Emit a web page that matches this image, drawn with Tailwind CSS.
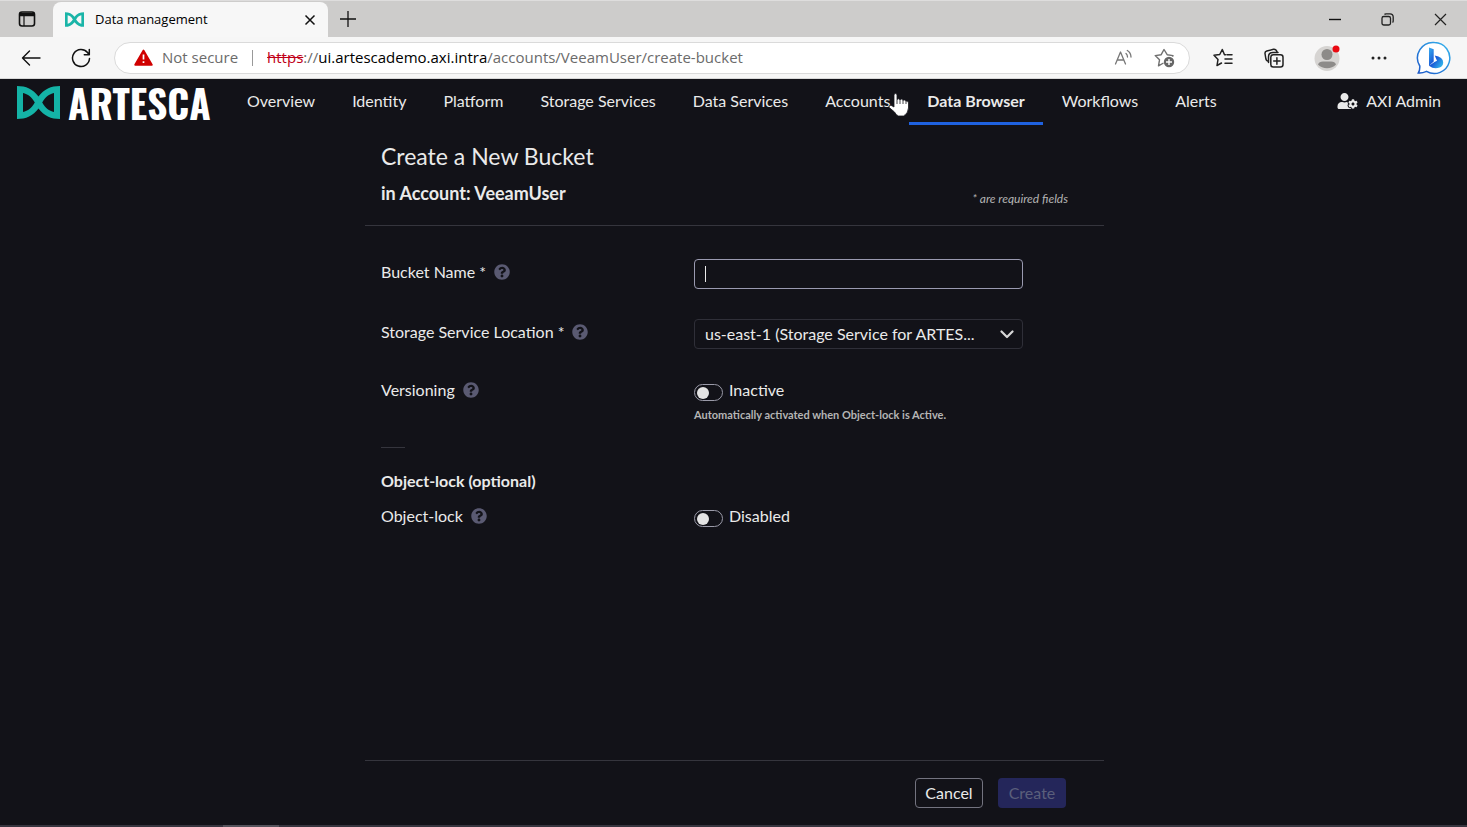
<!DOCTYPE html>
<html lang="en">
<head>
<meta charset="utf-8">
<meta name="viewport" content="width=device-width, initial-scale=1">
<title>Data management</title>
<script src="https://cdn.jsdelivr.net/npm/@tailwindcss/browser@4"></script>
</head>
<body class="flex min-h-screen flex-col bg-[#121218] font-['Lato',sans-serif] text-base text-[#eaeaea]">

<svg class="hidden" aria-hidden="true">
  <symbol id="bowtie" viewBox="0 0 43 33">
    <path fill-rule="evenodd" d="M0 0C9 0 16 3 21.500 10.500C27 3 34 0 43 0V33C34 33 27 30 21.500 22.500C16 30 9 33 0 33ZM6 7V26C11 25 14.500 22 17.800 16.500C14.500 11 11 8 6 7ZM37 7C32 8 28.500 11 25.200 16.500C28.500 22 32 25 37 26Z"/>
  </symbol>
  <symbol id="help" viewBox="0 0 512 512">
    <path d="M504 256c0 137-111 248-248 248S8 393 8 256C8 119 119 8 256 8s248 111 248 248zM262.700 90c-54.500 0-89.300 23-116.500 63.800-3.500 5.300-2.400 12.400 2.700 16.300l34.700 26.300c5.200 3.900 12.600 3 16.700-2.100 17.900-22.700 30.100-35.800 57.300-35.800 20.400 0 45.700 13.100 45.700 33 0 15-12.400 22.700-32.500 34C247.100 238.500 216 254.900 216 296v4c0 6.600 5.400 12 12 12h56c6.600 0 12-5.400 12-12v-1.300c0-28.500 83.200-29.600 83.200-106.700 0-58-60.200-102-116.500-102zM256 338c-25.400 0-46 20.600-46 46s20.600 46 46 46 46-20.600 46-46-20.600-46-46-46z"/>
  </symbol>
</svg>

<!-- Browser window -->
<div class="font-['Open_Sans',sans-serif] text-black">
  <div class="flex h-[37px] items-stretch border-t border-[#dedddd] bg-[#cdcccb]">
    <button type="button" aria-label="Tab actions" class="flex w-[53px] items-center justify-center">
      <svg class="size-[18px]" viewBox="0 0 18 18" fill="none" stroke="#111" stroke-width="1.600"><rect x="1.500" y="2" width="15" height="14" rx="2.500"/><path d="M1.500 4.500h15" stroke-width="3.500"/><path d="M6 6v10" stroke-width="1.200"/></svg>
    </button>
    <div class="mt-px flex w-[275px] items-center rounded-t-lg bg-[#f7f7f7] pr-3 pl-3">
      <svg class="h-[15px] w-[19px]" fill="#1ab5a8"><use href="#bowtie"/></svg>
      <span class="ml-[11px] flex-1 text-[13px]">Data management</span>
      <button type="button" aria-label="Close tab"><svg class="size-3" viewBox="0 0 12 12" stroke="#111" stroke-width="1.500"><path d="M1.500 1.500l9 9M10.500 1.500l-9 9"/></svg></button>
    </div>
    <button type="button" aria-label="New tab" class="flex w-10 items-center justify-center"><svg class="size-4" viewBox="0 0 16 16" stroke="#111" stroke-width="1.300"><path d="M8 0v16M0 8h16"/></svg></button>
    <div class="flex-1"></div>
    <button type="button" aria-label="Minimize" class="flex w-[53px] items-center justify-center"><svg class="size-3" viewBox="0 0 12 12" stroke="#111" stroke-width="1.400"><path d="M0 6.500h12"/></svg></button>
    <button type="button" aria-label="Restore" class="flex w-[53px] items-center justify-center"><svg class="size-[13px]" viewBox="0 0 13 13" fill="none" stroke="#222" stroke-width="1.300"><rect x="1" y="3.500" width="8.500" height="8.500" rx="1.800"/><path d="M3.500 1.500Q4 .8 5 .8h4q3.200 0 3.200 3.200v4q0 1-.7 1.500"/></svg></button>
    <button type="button" aria-label="Close" class="flex w-[53px] items-center justify-center"><svg class="size-[13px]" viewBox="0 0 13 13" stroke="#222" stroke-width="1.200"><path d="M1 1l11 11M12 1L1 12"/></svg></button>
  </div>

  <div class="flex h-[42px] items-center border-b border-[#d8d8d8] bg-[#f6f6f6]">
    <button type="button" aria-label="Back" class="ml-[21px]"><svg class="size-5" viewBox="0 0 20 20" fill="none" stroke="#111" stroke-width="1.400" stroke-linecap="round" stroke-linejoin="round"><path d="M19 10H1.500M8.500 3L1.500 10l7 7"/></svg></button>
    <button type="button" aria-label="Refresh" class="ml-[30px]"><svg class="size-5" viewBox="0 0 20 20" fill="none" stroke="#111" stroke-width="1.500" stroke-linecap="round" stroke-linejoin="round"><path d="M18.500 10.500A8.500 8.500 0 1 1 16.500 4.500L18 6.500M18.300 1.500v5.200h-5"/></svg></button>
    <div class="ml-[23px] flex h-8 flex-1 items-center rounded-full border border-[#dadada] bg-white pr-[14px] pl-[19px] text-[15px]">
      <svg class="h-[17px] w-[19px]" viewBox="0 0 19 17"><path d="M9.500 1.500L17.800 15.800H1.200Z" fill="#d00000" stroke="#d00000" stroke-width="1.800" stroke-linejoin="round"/><path d="M9.500 5.500v5M9.500 12.200v1.800" stroke="#fff" stroke-width="1.700"/></svg>
      <span class="ml-[9px] text-[#6b6b6b]">Not secure</span>
      <span class="mx-[14px] h-4 w-px bg-[#999]"></span>
      <span class="flex-1 whitespace-nowrap text-[#6b6b6b]"><s class="text-[#c00018]">https</s>://<span class="text-black">ui.artescademo.axi.intra</span>/accounts/VeeamUser/create-bucket</span>
      <button type="button" aria-label="Read aloud"><svg class="h-[18px] w-5" viewBox="0 0 20 18" fill="none" stroke="#777" stroke-width="1.300" stroke-linecap="round" stroke-linejoin="round"><path d="M1.500 15L6.500 3l5 12M3.200 11h6.600M12 4.500q1.500 1.300 1.500 3.500M13.300 1.500q3.500 2 3.700 6.500"/></svg></button>
      <button type="button" aria-label="Add to favorites" class="ml-5"><svg class="h-5 w-[21px]" viewBox="0 0 21 20" fill="none" stroke="#707070" stroke-width="1.400" stroke-linejoin="round"><path d="M18.500 8.800L19 7.600l-5.800-.9L10 1.500 7.200 6.700l-6 .9 4.300 4.200-1 6L9.500 15"/><circle cx="15" cy="14" r="5.200" fill="#666" stroke="none"/><path d="M15 11v6M12 14h6" stroke="#fff"/></svg></button>
    </div>
    <button type="button" aria-label="Favorites" class="ml-[23px]"><svg class="h-[19px] w-5" viewBox="0 0 20 19" fill="none" stroke="#222" stroke-width="1.500" stroke-linejoin="round" stroke-linecap="round"><path d="M11.500 6.700L9.300 1.500 6.700 6.500 1 7.300l4 4.200-1 6L8.500 15M14 6.700h5M12 11h7M12 15.200h7M11.500 6.700h1"/></svg></button>
    <button type="button" aria-label="Collections" class="ml-[31px]"><svg class="size-5" viewBox="0 0 20 20" fill="none" stroke="#222" stroke-width="1.500" stroke-linejoin="round" stroke-linecap="round"><path d="M3.500 13Q2.300 12.500 1.900 11L1 5.500Q.8 3.500 2.800 3L9.500 1.300Q12 1 13 3.800"/><rect x="6.800" y="6.800" width="12.200" height="12.200" rx="2.500" fill="#f6f6f6"/><path d="M4.500 14.500V9Q4.500 4.500 9 4.500h5M12.900 9.800v6.400M9.700 13h6.400"/></svg></button>
    <button type="button" aria-label="Profile" class="ml-[30px]"><svg class="size-[26px]" viewBox="0 0 26 26"><circle cx="13" cy="13.500" r="12.500" fill="#d6d4d2"/><circle cx="13" cy="9.500" r="5.500" fill="#8d8b89"/><path d="M4 19.500Q5 16.500 9 16.500h8q4 0 5 3a12.500 12.500 0 0 1-18 0Z" fill="#8d8b89"/><circle cx="22" cy="4" r="3.500" fill="#ea0a12"/></svg></button>
    <button type="button" aria-label="Settings and more" class="ml-[31px]"><svg class="h-1 w-4" viewBox="0 0 16 4" fill="#222"><circle cx="2" cy="2" r="1.500"/><circle cx="8" cy="2" r="1.500"/><circle cx="14" cy="2" r="1.500"/></svg></button>
    <button type="button" aria-label="Bing chat" class="mr-[15px] ml-[29px]"><svg class="size-9" viewBox="0 0 36 36"><defs><linearGradient id="ring" x1="0" y1="1" x2="1" y2="0"><stop offset="0" stop-color="#1b57c8"/><stop offset="1" stop-color="#35b5ee"/></linearGradient><linearGradient id="bee" x1="0" y1="0" x2="1" y2="1"><stop offset="0" stop-color="#38b0f0"/><stop offset=".5" stop-color="#1856d6"/><stop offset="1" stop-color="#38cdf0"/></linearGradient></defs><path d="M18.500 2.500A15.500 15.500 0 1 1 10.500 31.400Q6 33.500 2.300 33 4 30.500 3.800 26A15.500 15.500 0 0 1 18.500 2.500Z" fill="#fff" stroke="url(#ring)" stroke-width="1.500"/><path d="M13 7.500l4.700 1.700v12.300l-4.700 4.200ZM13 25.700l5.500-3.700 2.500-1.200-2.300-5.300q8.500 1.500 8.500 7 0 3.500-3.500 5-5.700 2.300-10.700-1.800Z" fill="url(#bee)"/></svg></button>
  </div>
</div>

<!-- Application navigation -->
<header class="relative flex h-[46px] items-stretch">
  <a href="#" class="ml-[17px] flex w-[212px] items-center gap-2" aria-label="Artesca">
    <svg class="h-[33px] w-[43px] shrink-0" fill="#14b3a6"><use href="#bowtie"/></svg>
    <span class="font-['Oswald','Roboto_Condensed','Open_Sans_Condensed','Noto_Sans_Condensed','Liberation_Sans',sans-serif] text-[39px] leading-none font-bold text-white">ARTESCA</span>
  </a>
  <nav class="flex gap-px whitespace-nowrap">
    <a href="#" class="flex items-center border-b-3 border-transparent px-[18px]">Overview</a>
    <a href="#" class="flex items-center border-b-3 border-transparent px-[18px]">Identity</a>
    <a href="#" class="flex items-center border-b-3 border-transparent px-[18px]">Platform</a>
    <a href="#" class="flex items-center border-b-3 border-transparent px-[18px]">Storage Services</a>
    <a href="#" class="flex items-center border-b-3 border-transparent px-[18px]">Data Services</a>
    <a href="#" class="flex items-center border-b-3 border-transparent px-[18px]">Accounts</a>
    <a href="#" aria-current="page" class="flex items-center border-b-3 border-[#1f62e0] px-[18px] font-bold">Data Browser</a>
    <a href="#" class="flex items-center border-b-3 border-transparent px-[18px]">Workflows</a>
    <a href="#" class="flex items-center border-b-3 border-transparent px-[18px]">Alerts</a>
  </nav>
  <button type="button" class="mr-[26px] ml-auto flex items-center gap-2 pb-[3px]">
    <svg class="h-4 w-[21px]" viewBox="0 0 640 512" fill="#eaeaea"><path d="M610.500 373.300c2.600-14.100 2.600-28.500 0-42.600l25.800-14.900c3-1.700 4.300-5.200 3.300-8.500-6.700-21.600-18.200-41.200-33.200-57.400-2.300-2.500-6-3.100-9-1.400l-25.800 14.900c-10.900-9.300-23.400-16.500-36.900-21.300v-29.800c0-3.400-2.400-6.400-5.700-7.100-22.300-5-45-4.800-66.200 0-3.300.7-5.700 3.700-5.700 7.100v29.800c-13.500 4.800-26 12-36.900 21.300l-25.800-14.900c-2.900-1.700-6.700-1.100-9 1.400-15 16.200-26.500 35.800-33.200 57.400-1 3.300.4 6.800 3.300 8.500l25.800 14.900c-2.600 14.100-2.600 28.500 0 42.600l-25.800 14.900c-3 1.700-4.300 5.200-3.300 8.500 6.700 21.600 18.200 41.100 33.200 57.400 2.300 2.500 6 3.100 9 1.400l25.800-14.900c10.900 9.300 23.400 16.500 36.900 21.300v29.800c0 3.400 2.400 6.400 5.700 7.100 22.300 5 45 4.800 66.200 0 3.300-.7 5.700-3.700 5.700-7.100v-29.800c13.500-4.800 26-12 36.900-21.300l25.800 14.900c2.900 1.700 6.700 1.100 9-1.400 15-16.200 26.500-35.800 33.200-57.400 1-3.300-.4-6.800-3.300-8.500l-25.800-14.900zM496 400.500c-26.800 0-48.500-21.800-48.500-48.500s21.800-48.500 48.500-48.500 48.500 21.800 48.500 48.500-21.700 48.500-48.500 48.500zM224 256c70.700 0 128-57.300 128-128S294.700 0 224 0 96 57.300 96 128s57.300 128 128 128zm201.200 226.500c-2.300-1.200-4.600-2.600-6.800-3.900l-7.900 4.600c-6 3.400-12.800 5.300-19.600 5.300-10.900 0-21.400-4.600-28.900-12.600-18.300-19.800-32.300-43.900-40.200-69.600-5.500-17.700 1.900-36.400 17.900-45.700l7.900-4.600c-.1-2.600-.1-5.200 0-7.800l-7.900-4.600c-16-9.200-23.400-28-17.900-45.700.9-2.900 2.200-5.800 3.200-8.700-3.800-.3-7.500-1.200-11.400-1.200h-16.700c-22.200 10.200-46.900 16-72.900 16s-50.600-5.800-72.900-16h-16.700C60.200 288 0 348.200 0 422.400V464c0 26.500 21.500 48 48 48h352c10.100 0 19.500-3.200 27.200-8.500-1.200-3.800-2-7.700-2-11.800v-9.200z"/></svg>
    <span>AXI Admin</span>
  </button>
  <!-- Mouse pointer -->
  <svg class="absolute top-[14px] left-[888px] h-6 w-[22px]" viewBox="0 0 22 24" fill="#fff" stroke="#16161d" stroke-width=".8" aria-hidden="true"><path d="M6 1.500Q7.500-.3 9 1.500V6.500Q10.500 5 12 6.700 13.500 5.300 15 7.300 16.500 6.300 18 8 20.500 7.500 20.500 10V15Q20 21 15.500 23H10.500Q8 22 6.500 19L1.200 14.500Q.5 12 3 12.300L6 14Z"/><path d="M9 6.500V11M12 6.700V11M15 7.300V11M18 8V11"/></svg>
</header>

<!-- Create bucket form -->
<main class="flex flex-1 flex-col pl-[2px]">
<form class="mx-auto flex w-full max-w-[739px] flex-1 flex-col">
  <div class="border-b border-[#35353d] px-4 pt-[17px] pb-[18px]">
    <h1 class="text-[23px] leading-7">Create a New Bucket</h1>
    <div class="mt-[9px] flex items-end justify-between pr-5">
      <h2 class="text-lg leading-7 font-bold">in Account: VeeamUser</h2>
      <p class="text-xs leading-4 text-[#b5b5b5] italic">* are required fields</p>
    </div>
  </div>

  <div class="grid grid-cols-[313px_329px] px-4 pt-8">
    <div class="flex h-7 items-center gap-2"><label for="bucket">Bucket Name *</label><svg class="size-4" fill="#5a5a72"><use href="#help"/></svg></div>
    <div class="relative h-[60px] pt-px">
      <input id="bucket" type="text" class="h-[30px] w-full rounded border border-[#9a9ab0] bg-transparent px-[11px] outline-none">
      <span class="absolute top-2 left-[11px] h-4 w-px bg-[#eaeaea]"></span>
    </div>

    <div class="flex h-7 items-center gap-2"><label for="location">Storage Service Location *</label><svg class="size-4" fill="#5a5a72"><use href="#help"/></svg></div>
    <div class="relative h-[58px] pt-px">
      <select id="location" class="h-[30px] w-full appearance-none rounded border border-[#2f2f38] bg-transparent px-[10px] outline-none"><option>us-east-1 (Storage Service for ARTES...</option></select>
      <svg class="pointer-events-none absolute top-3 right-[9px] h-[9px] w-[14px]" viewBox="0 0 14 9" fill="none" stroke="#d8d8d8" stroke-width="2.200" stroke-linecap="round" stroke-linejoin="round"><path d="M1.500 1.500L7 7l5.500-5.500"/></svg>
    </div>

    <div class="flex h-7 items-center gap-2"><label for="versioning">Versioning</label><svg class="size-4" fill="#5a5a72"><use href="#help"/></svg></div>
    <div>
      <label class="flex h-7 items-center gap-[6px]">
        <input id="versioning" type="checkbox" class="mt-1 h-[17px] w-[29px] appearance-none rounded-full border border-[#9a9aa8] p-[2px] before:block before:size-[12px] before:rounded-full before:bg-[#e4e4e4]">
        <span>Inactive</span>
      </label>
      <p class="mt-[3px] text-[11px] leading-4 font-bold text-[#b5b5b5]">Automatically activated when Object-lock is Active.</p>
    </div>
  </div>

  <div class="px-4">
    <hr class="mt-6 w-6 border-[#35353d]">
    <h3 class="mt-[19px] leading-7 font-bold">Object-lock (optional)</h3>
    <div class="mt-[7px] grid grid-cols-[313px_329px]">
      <div class="flex h-7 items-center gap-2"><label for="lock">Object-lock</label><svg class="size-4" fill="#5a5a72"><use href="#help"/></svg></div>
      <label class="flex h-7 items-center gap-[6px]">
        <input id="lock" type="checkbox" class="mt-1 h-[17px] w-[29px] appearance-none rounded-full border border-[#9a9aa8] p-[2px] before:block before:size-[12px] before:rounded-full before:bg-[#e4e4e4]">
        <span>Disabled</span>
      </label>
    </div>
  </div>

  <div class="mt-auto flex justify-end gap-[15px] border-t border-[#35353d] pt-[17px] pr-[38px] pb-[17px]">
    <button type="button" class="h-[30px] w-[68px] rounded border border-[#73737f]">Cancel</button>
    <button type="submit" disabled class="h-[30px] w-[68px] rounded bg-[#24265a] text-[#5b5f7b]">Create</button>
  </div>
</form>
</main>
<div class="flex h-[2px] bg-[#37353f]"><div class="ml-[223px] w-14 bg-[#55535c]"></div></div>
</body>
</html>
